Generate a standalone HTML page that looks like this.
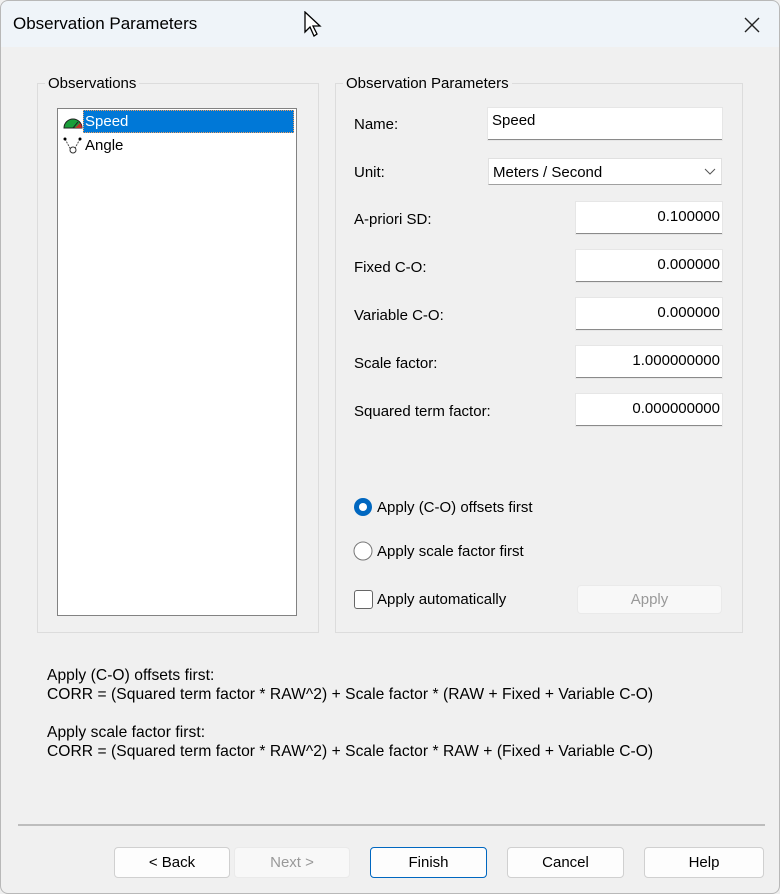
<!DOCTYPE html>
<html><head><style>
*{margin:0;padding:0;box-sizing:border-box}
body{width:780px;height:894px;background:#f0f0f0;font-family:"Liberation Sans",sans-serif;font-size:15px;color:#000;position:relative;overflow:hidden}
.a{position:absolute}
.win{left:0;top:0;width:780px;height:894px;border-radius:8px;background:#f0f0f0;overflow:hidden}
.frame{left:0;top:0;width:780px;height:894px;border:1px solid #b8b8b8;border-radius:8px;pointer-events:none}
.title{left:0;top:0;width:780px;height:47px;background:#eff4f9}
.gb{border:1px solid #dcdcdc}
.leg{background:#f0f0f0;padding:0 3px}
.tb{background:#fff;border-bottom:1px solid #8a8a8a;height:32px;box-shadow:0 0 0 1px #e6e6e6}
.num{text-align:right;padding:6px 2px 0 0}
.btn{background:#fdfdfd;border:1px solid #d0d0d0;border-radius:4px;height:31px;text-align:center;line-height:29px;font-size:15px}
.lbl{left:354px;font-size:15px}
.f{left:47px;font-size:15.6px;line-height:19px;letter-spacing:0.05px}
</style></head><body>
<div class="a win">
<div class="a title"></div>
<div class="a" style="left:13px;top:14px;font-size:17px">Observation Parameters</div>
<svg class="a" style="left:742px;top:15px" width="20" height="20"><path d="M3 3L17 17M17 3L3 17" stroke="#222" stroke-width="1.4"/></svg>
<svg class="a" style="left:304px;top:11px" width="22" height="30"><path d="M1 1L1 21L6 16L10 25L13 23L9 15L16 15Z" fill="#fff" stroke="#000" stroke-width="1.3"/></svg>

<div class="a gb" style="left:37px;top:83px;width:282px;height:550px"></div>
<div class="a leg" style="left:45px;top:75px">Observations</div>
<div class="a" style="left:57px;top:108px;width:240px;height:508px;background:#fff;border:1px solid #828282"></div>
<div class="a" style="left:83px;top:110px;width:211px;height:23px;background:#0078d7;border:1px dotted #f0a060"></div>
<div class="a" style="left:85px;top:113px;color:#fff">Speed</div>
<svg class="a" style="left:63px;top:114px" width="20" height="16"><path d="M1 14A9 9 0 0 1 19 14Z" fill="#1a9e3a" stroke="#222"/><path d="M12 14L17 9A9 9 0 0 1 19 14Z" fill="#c0302a"/><path d="M10 14L15 8" stroke="#222"/></svg>
<div class="a" style="left:85px;top:137px">Angle</div>
<svg class="a" style="left:63px;top:136px" width="20" height="18"><path d="M2 3L8 14M17 3L11 14" stroke="#555" stroke-dasharray="2 1"/><circle cx="2" cy="3" r="1.5"/><circle cx="17" cy="3" r="1.5"/><circle cx="10" cy="14" r="3" fill="#fff" stroke="#333"/></svg>

<div class="a gb" style="left:335px;top:83px;width:408px;height:550px"></div>
<div class="a leg" style="left:343px;top:75px">Observation Parameters</div>

<div class="a lbl" style="top:116px">Name:</div>
<div class="a tb" style="left:488px;top:108px;width:234px;padding:4px 0 0 4px">Speed</div>
<div class="a lbl" style="top:164px">Unit:</div>
<div class="a" style="left:488px;top:158px;width:234px;height:27px;background:#fff;border:1px solid #e0e0e0;border-bottom-color:#a0a0a0;padding:5px 0 0 4px">Meters / Second</div>
<svg class="a" style="left:704px;top:168px" width="12" height="8"><path d="M1 1L6 6L11 1" fill="none" stroke="#555"/></svg>

<div class="a lbl" style="top:211px">A-priori SD:</div>
<div class="a tb num" style="left:576px;top:202px;width:146px">0.100000</div>
<div class="a lbl" style="top:259px">Fixed C-O:</div>
<div class="a tb num" style="left:576px;top:250px;width:146px">0.000000</div>
<div class="a lbl" style="top:307px">Variable C-O:</div>
<div class="a tb num" style="left:576px;top:298px;width:146px">0.000000</div>
<div class="a lbl" style="top:355px">Scale factor:</div>
<div class="a tb num" style="left:576px;top:346px;width:146px">1.000000000</div>
<div class="a lbl" style="top:403px">Squared term factor:</div>
<div class="a tb num" style="left:576px;top:394px;width:146px">0.000000000</div>

<svg class="a" style="left:353px;top:497px" width="22" height="22"><circle cx="10" cy="10" r="9" fill="#0067c0"/><circle cx="10" cy="10" r="4" fill="#fff"/></svg>
<div class="a" style="left:377px;top:499px">Apply (C-O) offsets first</div>
<svg class="a" style="left:353px;top:541px" width="22" height="22"><circle cx="10" cy="10" r="9" fill="#fff" stroke="#777"/></svg>
<div class="a" style="left:377px;top:543px">Apply scale factor first</div>
<div class="a" style="left:354px;top:590px;width:19px;height:19px;border:1px solid #666;border-radius:3px;background:#fff"></div>
<div class="a" style="left:377px;top:591px">Apply automatically</div>
<div class="a btn" style="left:577px;top:585px;width:145px;height:29px;background:#f8f8f8;border-color:#eaeaea;color:#999;line-height:27px">Apply</div>

<div class="a f" style="top:666px">Apply (C-O) offsets first:<br>CORR = (Squared term factor * RAW^2) + Scale factor * (RAW + Fixed + Variable C-O)</div>
<div class="a f" style="top:723px">Apply scale factor first:<br>CORR = (Squared term factor * RAW^2) + Scale factor * RAW + (Fixed + Variable C-O)</div>

<div class="a" style="left:18px;top:824px;width:747px;height:2px;background:#bdbdbd"></div>
<div class="a btn" style="left:114px;top:847px;width:116px">&lt; Back</div>
<div class="a btn" style="left:234px;top:847px;width:116px;background:#f8f8f8;border-color:#eaeaea;color:#999">Next &gt;</div>
<div class="a btn" style="left:370px;top:847px;width:117px;border-color:#0067c0">Finish</div>
<div class="a btn" style="left:507px;top:847px;width:117px">Cancel</div>
<div class="a btn" style="left:644px;top:847px;width:120px">Help</div>
</div>
<div class="a frame"></div>
</body></html>
